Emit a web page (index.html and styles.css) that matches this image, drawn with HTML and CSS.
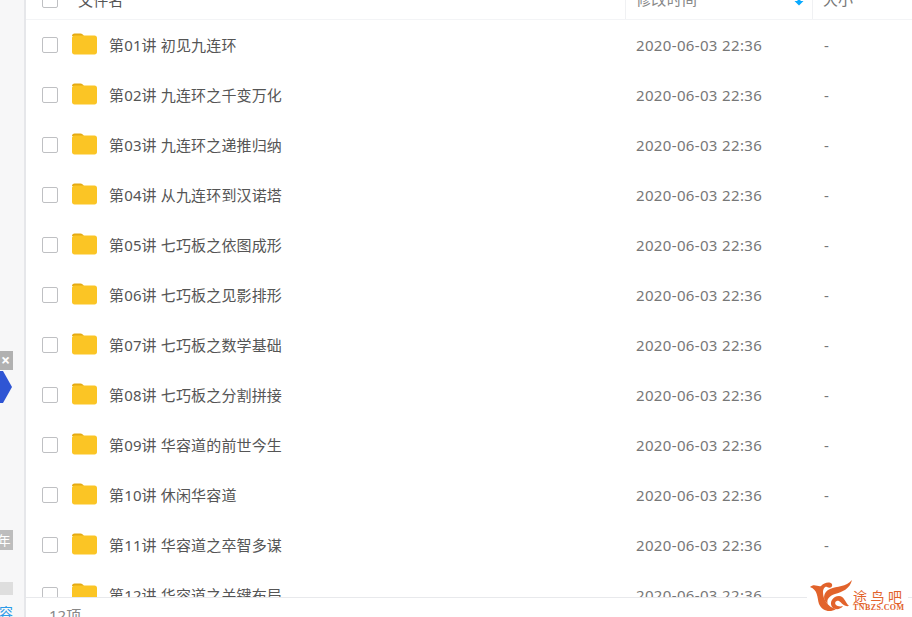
FILE: index.html
```html
<!DOCTYPE html>
<html>
<head>
<meta charset="utf-8"/>
<title>文件列表</title>
<link rel="stylesheet" href="styles.css">
</head>
<body>
<div class="app">
	<div class="side">
		<div class="ad-close">×</div>
		<svg class="ad-hex" width="12" height="34" viewBox="0 0 12 34"><path d="M0 1 L3 1 L12 17 L3 33 L0 33 Z" fill="#2f55d4"/></svg>
		<div class="side-tag">年</div>
		<div class="side-block"></div>
		<div class="side-link">容</div>
	</div>
	<div class="main">
		<div class="head">
			<div class="head-in">
				<span class="box"></span>
				<span class="c-name head-name">文件名</span>
				<span class="c-time head-cell">修改时间<svg class="sort" width="10" height="8" viewBox="0 0 10 8"><path d="M3.5 0 H6.5 V3 H9.5 L5 7.5 L.5 3 H3.5 Z" fill="#09aaff"/></svg></span>
				<span class="c-size head-cell">大小</span>
			</div>
		</div>
		<div class="list">
			<div class="row"><span class="box"></span><svg class="folder" width="26" height="22" viewBox="0 0 26 22"><use href="#fd"/></svg><span class="c-name">第01讲 初见九连环</span><span class="c-time">2020-06-03 22:36</span><span class="c-size">-</span></div>
			<div class="row"><span class="box"></span><svg class="folder" width="26" height="22" viewBox="0 0 26 22"><use href="#fd"/></svg><span class="c-name">第02讲 九连环之千变万化</span><span class="c-time">2020-06-03 22:36</span><span class="c-size">-</span></div>
			<div class="row"><span class="box"></span><svg class="folder" width="26" height="22" viewBox="0 0 26 22"><use href="#fd"/></svg><span class="c-name">第03讲 九连环之递推归纳</span><span class="c-time">2020-06-03 22:36</span><span class="c-size">-</span></div>
			<div class="row"><span class="box"></span><svg class="folder" width="26" height="22" viewBox="0 0 26 22"><use href="#fd"/></svg><span class="c-name">第04讲 从九连环到汉诺塔</span><span class="c-time">2020-06-03 22:36</span><span class="c-size">-</span></div>
			<div class="row"><span class="box"></span><svg class="folder" width="26" height="22" viewBox="0 0 26 22"><use href="#fd"/></svg><span class="c-name">第05讲 七巧板之依图成形</span><span class="c-time">2020-06-03 22:36</span><span class="c-size">-</span></div>
			<div class="row"><span class="box"></span><svg class="folder" width="26" height="22" viewBox="0 0 26 22"><use href="#fd"/></svg><span class="c-name">第06讲 七巧板之见影排形</span><span class="c-time">2020-06-03 22:36</span><span class="c-size">-</span></div>
			<div class="row"><span class="box"></span><svg class="folder" width="26" height="22" viewBox="0 0 26 22"><use href="#fd"/></svg><span class="c-name">第07讲 七巧板之数学基础</span><span class="c-time">2020-06-03 22:36</span><span class="c-size">-</span></div>
			<div class="row"><span class="box"></span><svg class="folder" width="26" height="22" viewBox="0 0 26 22"><use href="#fd"/></svg><span class="c-name">第08讲 七巧板之分割拼接</span><span class="c-time">2020-06-03 22:36</span><span class="c-size">-</span></div>
			<div class="row"><span class="box"></span><svg class="folder" width="26" height="22" viewBox="0 0 26 22"><use href="#fd"/></svg><span class="c-name">第09讲 华容道的前世今生</span><span class="c-time">2020-06-03 22:36</span><span class="c-size">-</span></div>
			<div class="row"><span class="box"></span><svg class="folder" width="26" height="22" viewBox="0 0 26 22"><use href="#fd"/></svg><span class="c-name">第10讲 休闲华容道</span><span class="c-time">2020-06-03 22:36</span><span class="c-size">-</span></div>
			<div class="row"><span class="box"></span><svg class="folder" width="26" height="22" viewBox="0 0 26 22"><use href="#fd"/></svg><span class="c-name">第11讲 华容道之卒智多谋</span><span class="c-time">2020-06-03 22:36</span><span class="c-size">-</span></div>
			<div class="row"><span class="box"></span><svg class="folder" width="26" height="22" viewBox="0 0 26 22"><use href="#fd"/></svg><span class="c-name">第12讲 华容道之关键布局</span><span class="c-time">2020-06-03 22:36</span><span class="c-size">-</span></div>
		</div>
		<div class="foot">12项</div>
	</div>
</div>

<div class="mark">
	<svg class="mark-logo" width="42" height="33" viewBox="0 0 42 33">
		<path d="M0 7 C4 3 8 7 11 6 C14 3 19 1 22 4 C23 7 20 9 17 7 C15 6 13 9 13 12 C13 20 18 27 26 29 C20 33 12 31 9 24 C7 17 8 10 0 7 Z" fill="#e2632b"/>
		<path d="M42 0 C40 9 32 12 25 14 C19 16 16 20 18 24 C12 20 13 12 20 9 C27 6 36 7 42 0 Z" fill="#e2632b"/>
		<path d="M22 27 C19 22 23 16 29 16 C34 16 35 22 39 26 C34 27 32 23 29 21 C26 20 24 23 26 25 C27 26 30 27 33 26 C30 30 25 30 22 27 Z" fill="#e2632b"/>
	</svg>
	<div class="mark-text">
		<div class="mark-cn">途鸟吧</div>
		<div class="mark-en">TNBZS.COM</div>
	</div>
</div>

<svg width="0" height="0" class="defs"><defs>
	<g id="fd">
		<path d="M0 3 C0 1.5 1 .5 2.5 .5 H8.5 C10 .5 11 1.5 12 3 H0 Z" fill="#e5ab14"/>
		<path d="M0 5 C0 3.5 1 2.5 2.5 2.5 H22.5 C24 2.5 25 3.5 25 5 V19 C25 20.5 24 21.5 22.5 21.5 H2.5 C1 21.5 0 20.5 0 19 Z" fill="#fbc525"/>
	</g>
</defs></svg>
</body>
</html>
```

FILE: styles.css
```css
html, body {
	margin: 0;
	height: 100%;
	overflow: hidden;
	background: #fff;
}
body {
	font-family: "Noto Sans", "Noto Sans CJK SC", sans-serif;
	font-size: 15px;
	color: #666;
}
.app {
	display: flex;
	height: 617px;
}
.defs {
	display: block;
}
/* left strip */
.side {
	width: 24px;
	flex: none;
	background: #f7f7f8;
	border-right: 2px solid #e6e7ea;
	position: relative;
	overflow: hidden;
}
.ad-close {
	position: absolute;
	left: -2px;
	top: 351px;
	width: 15px;
	height: 19px;
	background: #b1b1b1;
	color: #fff;
	font-size: 16px;
	font-weight: bold;
	line-height: 19px;
	text-align: center;
}
.ad-hex {
	position: absolute;
	left: 0;
	top: 370px;
}
.side-tag {
	position: absolute;
	left: -5px;
	top: 530px;
	width: 18px;
	height: 20px;
	background: #bdbdbd;
	color: #fff;
	font-size: 13px;
	line-height: 20px;
	text-align: center;
}
.side-block {
	position: absolute;
	left: 0;
	top: 582px;
	width: 13px;
	height: 13px;
	background: #dedede;
}
.side-link {
	position: absolute;
	left: -1px;
	top: 604px;
	color: #2c9be8;
	font-size: 14px;
	line-height: 18px;
}
/* file list */
.main {
	flex: 1;
	min-width: 0;
	display: flex;
	flex-direction: column;
}
.head {
	height: 19px;
	flex: none;
	border-bottom: 1px solid #f3f4f6;
	overflow: hidden;
}
.head-in {
	height: 40px;
	margin-top: -20px;
	display: flex;
	align-items: center;
	color: #888;
}
.head-cell {
	height: 40px;
	line-height: 38px;
	box-sizing: border-box;
	border-left: 1px solid #f0f1f3;
}
.head-name {
	margin-left: 20px;
	color: #888;
}
.head-in .c-name {
	width: 547px;
	padding-bottom: 2px;
}
.head-in .c-time {
	width: 188px;
	color: #888;
	position: relative;
}
.sort {
	position: absolute;
	left: 168px;
	top: 18px;
}
.list {
	flex: 1;
	min-height: 0;
	overflow: hidden;
}
.row {
	height: 50px;
	display: flex;
	align-items: center;
}
.box {
	width: 14px;
	height: 14px;
	flex: none;
	margin-left: 16px;
	border: 1px solid #bfc0c3;
	border-radius: 2px;
}
.folder {
	flex: none;
	margin-left: 14px;
	margin-right: 11px;
	margin-bottom: 2px;
}
.c-name {
	width: 527px;
	flex: none;
	color: #555;
	letter-spacing: .15px;
	padding-bottom: 2px;
}
.c-time {
	width: 189px;
	flex: none;
	color: #777;
	letter-spacing: .35px;
	padding-bottom: 1px;
}
.c-size {
	color: #777;
	margin-left: -1px;
}
.head-in .c-time, .head-in .c-size {
	padding-left: 10px;
	box-sizing: border-box;
}
.foot {
	height: 19px;
	flex: none;
	border-top: 1px solid #e8e9ec;
	padding-left: 23px;
	line-height: 34px;
	color: #888;
	overflow: hidden;
}
/* watermark */
.mark {
	position: absolute;
	left: 807px;
	top: 578px;
	width: 101px;
	height: 39px;
	background: #fff;
	display: flex;
	align-items: flex-start;
	gap: 1px;
	padding-left: 3px;
	box-sizing: border-box;
}
.mark-logo {
	margin-top: 2px;
	flex: none;
}
.mark-text {
	color: #e2632b;
	text-align: left;
	padding-top: 12px;
}
.mark-cn {
	font-size: 14px;
	line-height: 14px;
	letter-spacing: 3.5px;
}
.mark-en {
	font-family: "Liberation Serif", serif;
	font-size: 8px;
	font-weight: bold;
	line-height: 8px;
	letter-spacing: .4px;
}
```
